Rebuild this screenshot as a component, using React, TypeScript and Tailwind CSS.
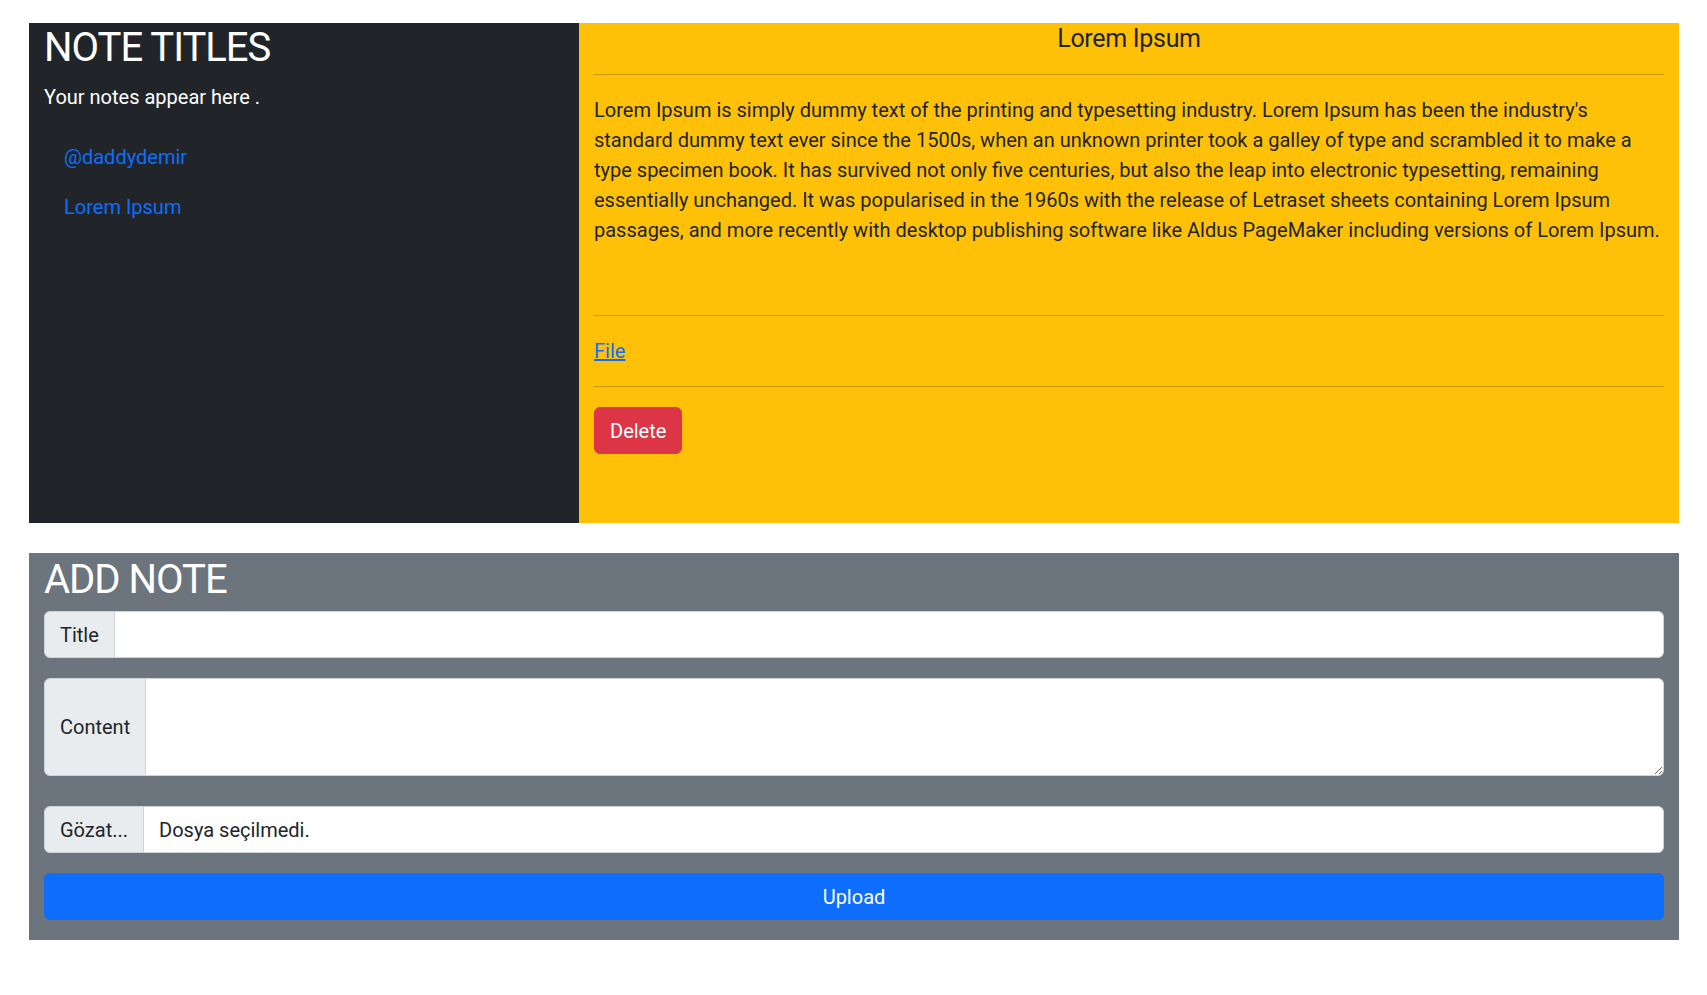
import React from 'react';

const notes = ['@daddydemir', 'Lorem Ipsum'];

const body =
  "Lorem Ipsum is simply dummy text of the printing and typesetting industry. Lorem Ipsum has been the industry's standard dummy text ever since the 1500s, when an unknown printer took a galley of type and scrambled it to make a type specimen book. It has survived not only five centuries, but also the leap into electronic typesetting, remaining essentially unchanged. It was popularised in the 1960s with the release of Letraset sheets containing Lorem Ipsum passages, and more recently with desktop publishing software like Aldus PageMaker including versions of Lorem Ipsum.";

function Rule() {
  return <div className="my-[20px] h-px bg-[#c89a10]" />;
}

export default function App() {
  return (
    <div className="min-h-screen bg-white pt-[23px] pl-[29px] pr-[28px] font-['Roboto',sans-serif] text-[20px] leading-[30px] text-[#212529]">
      {/* notes list + selected note */}
      <div className="flex">
        <div className="w-[550px] shrink-0 bg-[#212529] px-[15px]">
          <h2 className="mb-[10px] pt-[1px] text-[40px] leading-[48px] tracking-[-1px] text-white">NOTE TITLES</h2>
          <p className="mb-[20px] text-white">Your notes appear here .</p>
          <nav className="flex flex-col">
            {notes.map((n) => (
              <a key={n} href="#" className="px-[20px] py-[10px] text-[#0d6efd]">
                {n}
              </a>
            ))}
          </nav>
        </div>

        <div className="flex-1 bg-[#ffc107] px-[15px] pb-[69px]">
          <h5 className="pt-[1px] text-center text-[25px] leading-[30px] tracking-[-0.3px]">Lorem Ipsum</h5>
          <Rule />
          <p>{body}</p>
          <div className="h-[50px]" />
          <Rule />
          <a href="#" className="text-[#0d6efd] underline">
            File
          </a>
          <Rule />
          <button className="rounded-[6px] border border-[#dc3545] bg-[#dc3545] px-[15px] py-[7.5px] text-white">
            Delete
          </button>
        </div>
      </div>

      {/* add note form */}
      <div className="mt-[30px] bg-[#6c757d] px-[15px] pb-[20px]">
        <h2 className="mb-[7px] pt-[3px] text-[40px] leading-[48px] tracking-[-1px] text-white">ADD NOTE</h2>

        <div className="mb-[20px] flex">
          <span className="flex items-center rounded-l-[6px] border border-[#ced4da] bg-[#e9ecef] px-[15px] py-[7.5px]">
            Title
          </span>
          <input
            type="text"
            className="-ml-px min-w-0 flex-1 rounded-r-[6px] border border-[#ced4da] bg-white px-[15px] py-[7.5px] outline-none"
          />
        </div>

        <div className="mb-[30px] flex">
          <span className="flex items-center rounded-l-[6px] border border-[#ced4da] bg-[#e9ecef] px-[15px]">
            Content
          </span>
          <textarea className="-ml-px block h-[98px] min-w-0 flex-1 rounded-r-[6px] border border-[#ced4da] bg-white px-[15px] py-[7.5px] outline-none" />
        </div>

        <div className="mb-[20px] flex">
          <span className="flex items-center rounded-l-[6px] border border-[#ced4da] bg-[#e9ecef] px-[15px] py-[7.5px]">
            Gözat...
          </span>
          <span className="-ml-px flex flex-1 items-center rounded-r-[6px] border border-[#ced4da] bg-white px-[15px] py-[7.5px]">
            Dosya seçilmedi.
          </span>
        </div>

        <button className="block w-full rounded-[6px] border border-[#0d6efd] bg-[#0d6efd] py-[7.5px] text-center text-white">
          Upload
        </button>
      </div>
    </div>
  );
}
